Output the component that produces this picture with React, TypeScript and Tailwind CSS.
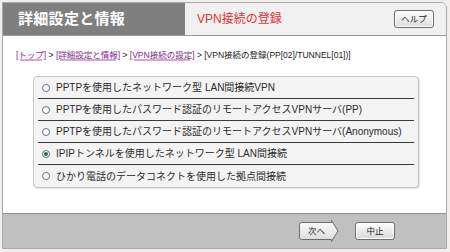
import React, { useState } from 'react';

const options = [
  'PPTPを使用したネットワーク型 LAN間接続VPN',
  'PPTPを使用したパスワード認証のリモートアクセスVPNサーバ(PP)',
  'PPTPを使用したパスワード認証のリモートアクセスVPNサーバ(Anonymous)',
  'IPIPトンネルを使用したネットワーク型 LAN間接続',
  'ひかり電話のデータコネクトを使用した拠点間接続',
];

function Radio({ checked }: { checked: boolean }) {
  return (
    <span className="flex h-[8px] w-[8px] shrink-0 items-center justify-center rounded-full border border-[#5d7187] bg-white">
      {checked && <span className="h-[4px] w-[4px] rounded-full bg-[#2f6b3a]" />}
    </span>
  );
}

export default function App() {
  const [selected, setSelected] = useState(3);

  return (
    <div className="h-[252px] w-[450px] bg-[#f4eded] pb-[3px] pl-[2px] pr-[3px] pt-[2px] font-['Liberation_Sans','Noto_Sans_CJK_JP',sans-serif]">
      <div className="flex h-full flex-col overflow-hidden rounded-tr-[6px] border border-[#a9a9a9] bg-white">
        <div className="flex h-[33px] shrink-0 border-b border-[#9a9a9a]">
          <div className="flex w-[182px] items-center bg-[#7f7f7f] pl-[15px] text-[15px] font-bold tracking-[0.3px] text-white">
            詳細設定と情報
          </div>
          <div className="flex flex-1 items-center justify-between bg-[#f0f0f0] pl-[12px] pr-[12px]">
            <span className="text-[12px] text-[#de3434]">VPN接続の登録</span>
            <button className="flex h-[18px] w-[40px] items-center justify-center rounded-[3px] border border-[#6d6d6d] bg-gradient-to-b from-white to-[#dcdcdc] text-[8.5px] text-[#222] shadow-[inset_0_0_0_1px_#fff]">
              ヘルプ
            </button>
          </div>
        </div>

        <div className="mt-[14px] pl-[13px] text-[8.5px] leading-[10px] text-[#222]">
          <span className="text-[#7b2b8b] underline decoration-[#d6a6d6] decoration-2 underline-offset-1">[トップ]</span>
          {' > '}
          <span className="text-[#7b2b8b] underline decoration-[#d6a6d6] decoration-2 underline-offset-1">[詳細設定と情報]</span>
          {' > '}
          <span className="text-[#7b2b8b] underline decoration-[#d6a6d6] decoration-2 underline-offset-1">[VPN接続の設定]</span>
          {' > '}
          <span>[VPN接続の登録(PP[02]/TUNNEL[01])]</span>
        </div>

        <div className="ml-[30px] mr-[27px] mt-[16px] rounded-[4px] border border-[#c6c6c6] bg-[#f3f3f3] px-[4px] shadow-[1px_1px_1px_#e2e2e2]">
          {options.map((label, i) => (
            <div
              key={label}
              onClick={() => setSelected(i)}
              className={`flex h-[22px] cursor-pointer items-center gap-[6px] pl-[4px] text-[10px] text-[#2a2a2a] ${
                i < options.length - 1 ? 'border-b border-[#3a3a3a]' : ''
              }`}
            >
              <Radio checked={selected === i} />
              <span>{label}</span>
            </div>
          ))}
        </div>

        <div className="flex-1" />

        <div className="flex h-[35px] shrink-0 items-center justify-end gap-[16px] border-t border-[#8f8f8f] bg-[#c0c0c0] pr-[51px]">
          <button className="relative flex h-[22px] w-[41px] items-center justify-center text-[8.5px] text-[#222]">
            <svg className="absolute inset-0" width="41" height="22" viewBox="0 0 41 22">
              <defs>
                <linearGradient id="nx" x1="0" y1="0" x2="0" y2="1">
                  <stop offset="0" stopColor="#ffffff" />
                  <stop offset="1" stopColor="#d8d8d8" />
                </linearGradient>
              </defs>
              <path d="M3.5 2.5 H33.5 L33.5 0.5 L40 11 L33.5 21.5 L33.5 19.5 H3.5 Q1.5 19.5 1.5 17.5 V4.5 Q1.5 2.5 3.5 2.5 Z" fill="url(#nx)" stroke="#6d6d6d" strokeWidth="1" />
            </svg>
            <span className="relative -ml-[4px]">次へ</span>
          </button>
          <button className="flex h-[18px] w-[40px] items-center justify-center rounded-[3px] border border-[#6d6d6d] bg-gradient-to-b from-white to-[#d8d8d8] text-[8.5px] text-[#222] shadow-[inset_0_0_0_1px_#fff]">
            中止
          </button>
        </div>
      </div>
    </div>
  );
}
